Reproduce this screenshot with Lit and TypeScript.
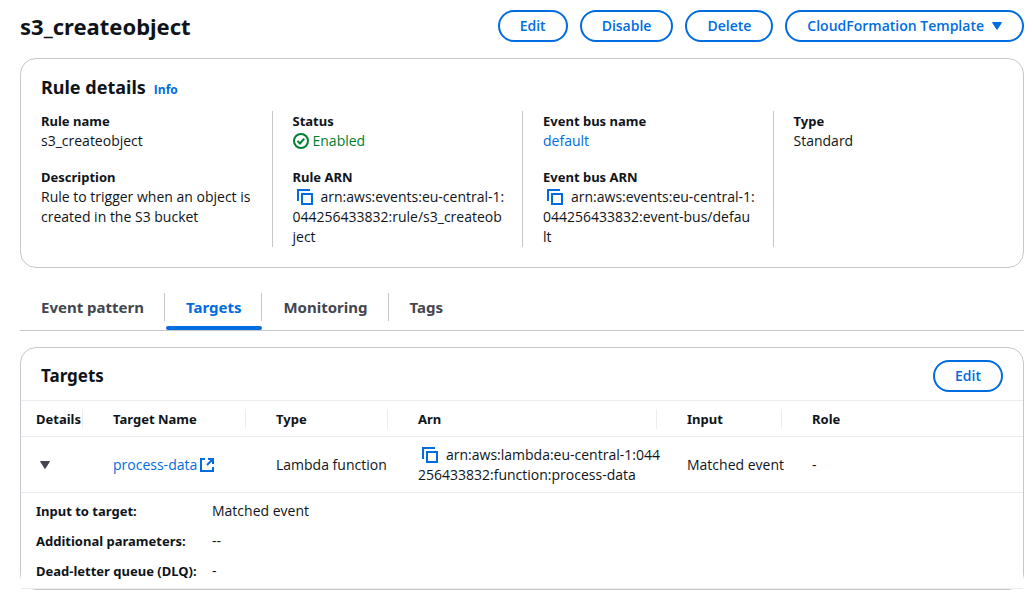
import { LitElement, html, css, svg } from "lit";
import { customElement } from "lit/decorators.js";

const copyIcon = svg`<svg class="icon" viewBox="0 0 16 16" aria-hidden="true">
  <path d="M1 12V1h12" fill="none" stroke="currentColor" stroke-width="2"/>
  <path d="M5 5h10v10H5z" fill="none" stroke="currentColor" stroke-width="2"/>
</svg>`;

const externalIcon = svg`<svg class="icon" viewBox="0 0 16 16" aria-hidden="true">
  <path d="M6 2H2v12h12v-4M9 2h5v5M14 2L8 8" fill="none" stroke="currentColor" stroke-width="2"/>
</svg>`;

const caret = svg`<svg class="caret" viewBox="0 0 10 8" aria-hidden="true">
  <path d="M0.5 0.5h9L5 7.5z" fill="currentColor" stroke="currentColor" stroke-linejoin="round"/>
</svg>`;

const checkIcon = svg`<svg class="icon" viewBox="0 0 16 16" aria-hidden="true">
  <circle cx="8" cy="8" r="7" fill="none" stroke="currentColor" stroke-width="2"/>
  <path d="M4.500 8l2.500 2.500 4.200-4.800" fill="none" stroke="currentColor" stroke-width="2"/>
</svg>`;

@customElement("app-root")
export class AppRoot extends LitElement {
  static styles = css`
    :host {
      display: block;
      box-sizing: border-box;
      padding: 10px 9px 10px 20px;
      background: #fff;
      color: #0f141a;
      font: 14px/20px "Open Sans", "Noto Sans", sans-serif;
    }
    * { box-sizing: border-box; }
    h1, h2, h3, dl, dd, p { margin: 0; }
    h1, h2, dt, th { font-family: "Noto Sans", "Open Sans", sans-serif; font-weight: 700; }
    dt, th { font-size: 13px; }
    a { color: #006ce0; text-decoration: none; }
    .top { display: flex; align-items: center; justify-content: space-between; }
    h1 { font-size: 22px; line-height: 32px; }
    .actions { display: flex; gap: 12px; }
    .btn {
      height: 32px;
      padding: 0 20px;
      border: 2px solid #006ce0;
      border-radius: 20px;
      background: #fff;
      color: #006ce0;
      font: inherit;
      font-weight: 600;
      display: inline-flex;
      align-items: center;
      gap: 8px;
      white-space: nowrap;
    }
    .caret { width: 10px; height: 8px; display: block; }
    .card { border: 1px solid #c6c6cd; border-radius: 16px; background: #fff; }
    .rule { margin-top: 16px; padding: 16px 0 20px; }
    .rule-head { display: flex; align-items: baseline; gap: 8px; padding: 0 20px; margin-bottom: 12px; }
    .rule-head h2 { font-size: 18px; line-height: 24px; }
    .info { font-size: 12px; line-height: 16px; font-weight: 700; }
    .columns { display: grid; grid-template-columns: repeat(4, 1fr); }
    .columns dl { padding: 0 20px; display: flex; flex-direction: column; gap: 16px; min-width: 0; }
    .columns dl + dl { border-left: 1px solid #c6c6cd; }
    .icon { width: 16px; height: 16px; flex: none; }
    .status { display: flex; align-items: center; gap: 4px; color: #00802f; }
    .arn { white-space: nowrap; }
    .copy {
      display: inline-flex;
      height: 16px;
      margin: 0 8px 0 4px;
      padding: 0;
      border: 0;
      background: none;
      color: #006ce0;
      vertical-align: -3px;
    }
    .tabs { display: flex; gap: 1px; margin-top: 20px; padding-left: 1px; border-bottom: 1px solid #c6c6cd; }
    .tab {
      height: 42px;
      padding: 0;
      border: 0;
      background: none;
      color: #424650;
      font: 700 15px/20px "Noto Sans", "Open Sans", sans-serif;
      display: flex;
      flex-direction: column;
      justify-content: flex-end;
    }
    .tab span { padding: 4px 20px; margin-bottom: 5px; border-right: 1px solid #c6c6cd; }
    .tab:last-child span { border-right: 0; }
    .tab::after { content: ""; height: 4px; width: 100%; border-radius: 2px; }
    .tab.active { color: #006ce0; }
    .tab.active::after { background: #006ce0; }
    .targets { margin-top: 16px; }
    .targets-head { display: flex; align-items: center; justify-content: space-between; padding: 12px 20px 8px; }
    .targets-head h2 { font-size: 17px; line-height: 24px; }
    table { width: 100%; table-layout: fixed; border-collapse: separate; border-spacing: 0; background: #fff; }
    .c-details { width: 62px; }
    .c-name { width: 163px; }
    .c-type { width: 142px; }
    .c-arn { width: 269px; }
    .c-input { width: 125px; }
    th, td { text-align: left; }
    td { padding: 8px 0 7px 30px; border-bottom: 1px solid #ebebf0; }
    td:first-child { padding-left: 19px; }
    th { border-top: 1px solid #ebebf0; border-bottom: 1px solid #ebebf0; padding: 8px 0 7px; white-space: nowrap; }
    th span { display: block; padding-left: 30px; border-right: 1px solid #ebebf0; }
    th:last-child span { border-right: 0; }
    th:first-child span { padding-left: 15px; }
    .nowrap { white-space: nowrap; }
    .toggle { display: block; padding: 0; border: 0; background: none; color: #424650; }
    .ext { display: flex; align-items: center; gap: 2px; white-space: nowrap; }
    .extra {
      display: grid;
      grid-template-columns: 176px 1fr;
      row-gap: 10px;
      padding: 8px 15px 7px;
      background: #fff;
      border-bottom: 1px solid #ebebf0;
    }
    .extra dt { white-space: nowrap; }
  `;

  private arn(label: string, lines: string[]) {
    return html`<button class="copy" type="button" aria-label=${label}>${copyIcon}</button>${lines.map(
      (line, i) => (i ? html`<br>${line}` : line)
    )}`;
  }

  render() {
    return html`
      <header class="top">
        <h1>s3_createobject</h1>
        <div class="actions">
          <button class="btn" type="button">Edit</button>
          <button class="btn" type="button">Disable</button>
          <button class="btn" type="button">Delete</button>
          <button class="btn" type="button" aria-haspopup="menu">CloudFormation Template ${caret}</button>
        </div>
      </header>

      <section class="card rule">
        <div class="rule-head"><h2>Rule details</h2><a class="info" href="#">Info</a></div>
        <div class="columns">
          <dl>
            <div><dt>Rule name</dt><dd>s3_createobject</dd></div>
            <div><dt>Description</dt><dd>Rule to trigger when an object is created in the S3 bucket</dd></div>
          </dl>
          <dl>
            <div><dt>Status</dt><dd class="status">${checkIcon}Enabled</dd></div>
            <div><dt>Rule ARN</dt><dd class="arn">${this.arn("Copy rule ARN", ["arn:aws:events:eu-central-1:", "044256433832:rule/s3_createob", "ject"])}</dd></div>
          </dl>
          <dl>
            <div><dt>Event bus name</dt><dd><a href="#">default</a></dd></div>
            <div><dt>Event bus ARN</dt><dd class="arn">${this.arn("Copy event bus ARN", ["arn:aws:events:eu-central-1:", "044256433832:event-bus/defau", "lt"])}</dd></div>
          </dl>
          <dl>
            <div><dt>Type</dt><dd>Standard</dd></div>
          </dl>
        </div>
      </section>

      <div class="tabs" role="tablist">
        ${["Event pattern", "Targets", "Monitoring", "Tags"].map(
          (name) => html`<button class="tab ${name === "Targets" ? "active" : ""}" type="button" role="tab"
            aria-selected=${name === "Targets" ? "true" : "false"}><span>${name}</span></button>`
        )}
      </div>

      <section class="card targets">
        <div class="targets-head"><h2>Targets</h2><button class="btn" type="button">Edit</button></div>
        <table>
          <colgroup>
            <col class="c-details"><col class="c-name"><col class="c-type"><col class="c-arn"><col class="c-input"><col>
          </colgroup>
          <thead>
            <tr>${["Details", "Target Name", "Type", "Arn", "Input", "Role"].map((t) => html`<th scope="col"><span>${t}</span></th>`)}</tr>
          </thead>
          <tbody>
            <tr>
              <td><button class="toggle" type="button" aria-expanded="true" aria-label="Toggle details">${caret}</button></td>
              <td><a class="ext" href="#">process-data${externalIcon}</a></td>
              <td class="nowrap">Lambda function</td>
              <td class="arn">${this.arn("Copy target ARN", ["arn:aws:lambda:eu-central-1:044", "256433832:function:process-data"])}</td>
              <td class="nowrap">Matched event</td>
              <td>-</td>
            </tr>
          </tbody>
        </table>
        <dl class="extra">
          <dt>Input to target:</dt><dd>Matched event</dd>
          <dt>Additional parameters:</dt><dd>--</dd>
          <dt>Dead-letter queue (DLQ):</dt><dd>-</dd>
        </dl>
      </section>
    `;
  }
}
